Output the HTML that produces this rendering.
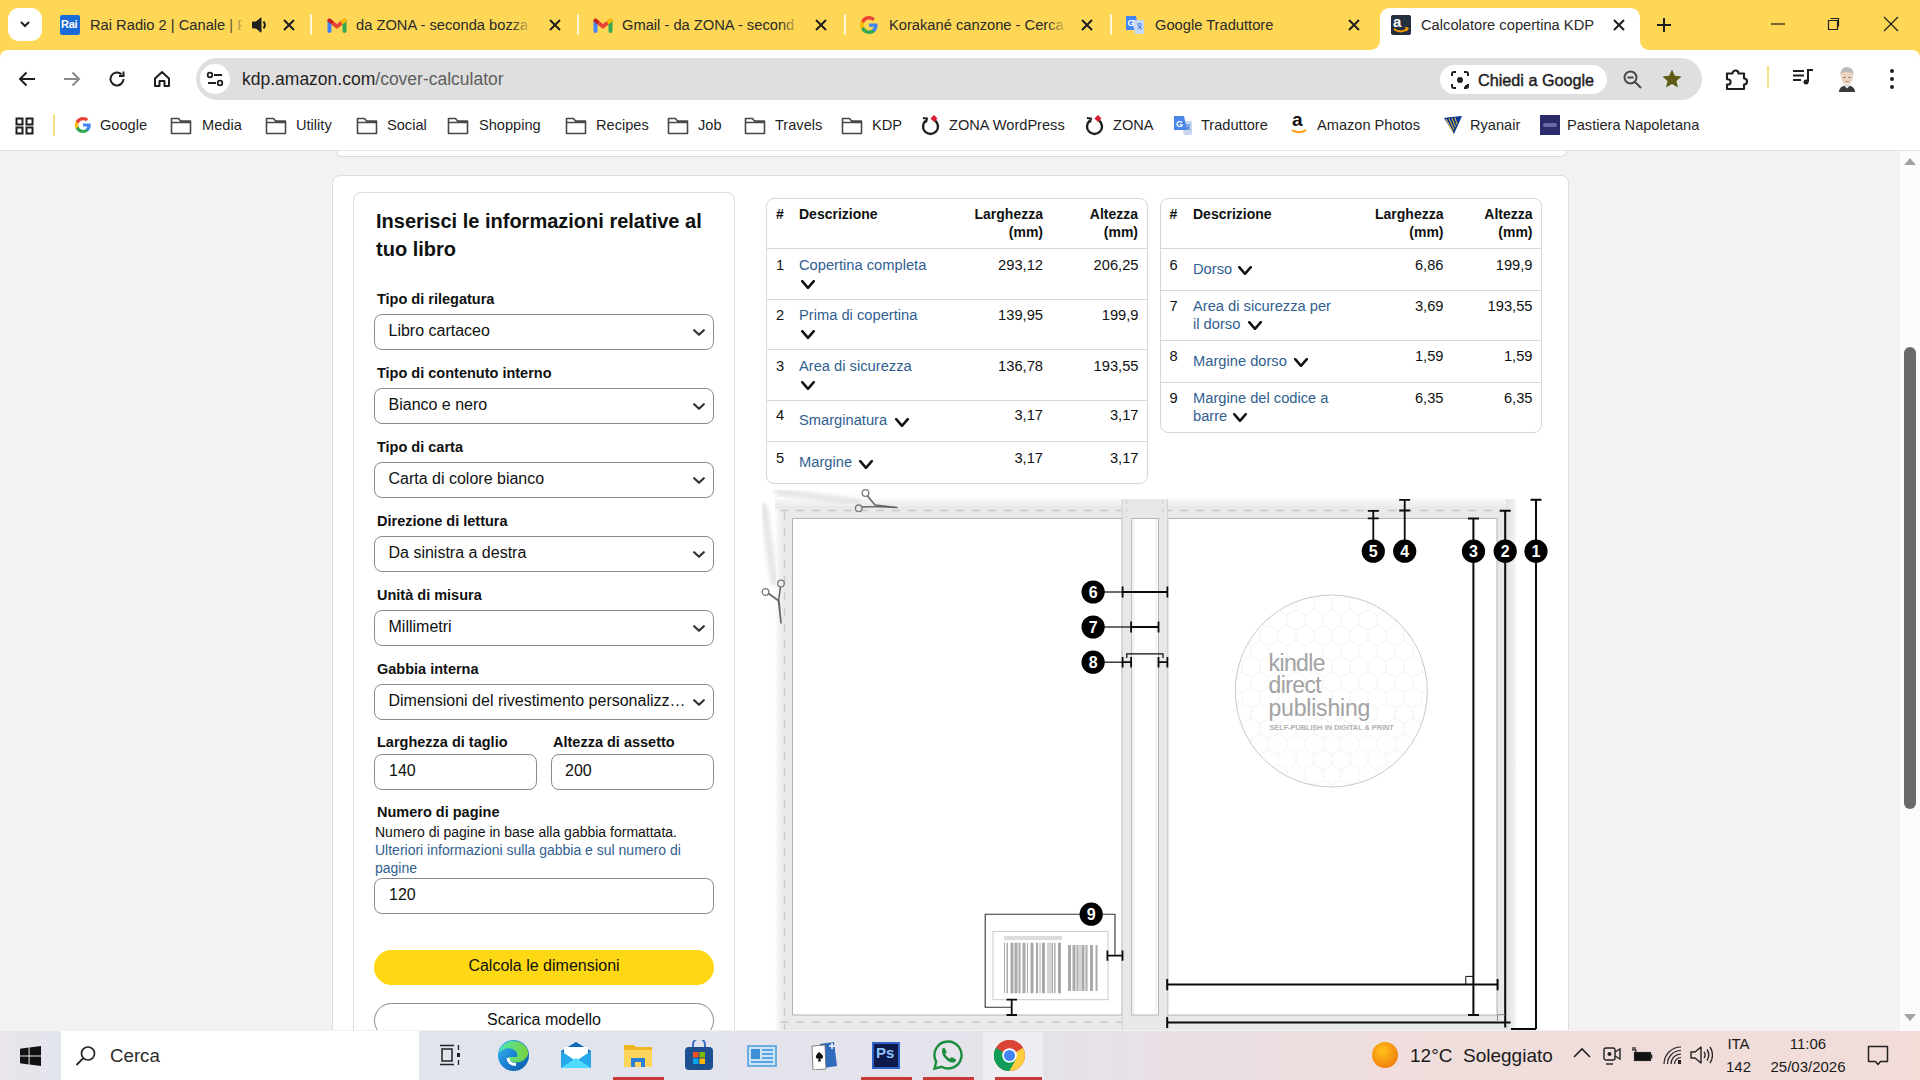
<!DOCTYPE html>
<html><head><meta charset="utf-8">
<style>
*{margin:0;padding:0;box-sizing:border-box}
html,body{width:1920px;height:1080px;overflow:hidden;background:#f2f2f2;font-family:"Liberation Sans",sans-serif;color:#0f1111}
.a{position:absolute;white-space:nowrap}
.t{line-height:normal}
#tabs{position:absolute;left:0;top:0;width:1920px;height:60px;background:#fed757}
#toolbar{position:absolute;left:0;top:50px;width:1920px;height:55px;background:#fff;border-radius:8px 8px 0 0}
#bookmarks{position:absolute;left:0;top:105px;width:1920px;height:46px;background:#fff;border-bottom:1px solid #e3e3e3}
.tt{font-size:14.7px;color:#2a2a2a;top:17px}
.fade{overflow:hidden}
.sep{position:absolute;top:14px;width:2px;height:21px;background:#fff6d8;border-radius:1px}
.bm{font-size:14.6px;color:#1f1f1f;top:116.5px}
</style></head><body>
<div id="tabs">
<div class="a" style="left:8px;top:8px;width:34px;height:33px;background:#fff;border-radius:11px"></div>
<svg class="a" style="left:18px;top:17px" width="14" height="14" viewBox="0 0 14 14"><path d="M3 5l4 4 4-4" fill="none" stroke="#1f1f1f" stroke-width="2"/></svg>
<!-- tab 1 -->
<div class="a" style="left:60px;top:15px;width:20px;height:20px;background:#1a6bd8;border-radius:2px"></div>
<div class="a" style="left:61px;top:18px;font-size:11px;font-weight:bold;color:#fff;letter-spacing:-0.3px">Rai</div>
<div class="a fade tt" style="left:90px;width:152px">Rai Radio 2 | Canale | R</div>
<div class="a" style="left:226px;top:14px;width:20px;height:22px;background:linear-gradient(90deg,rgba(254,215,87,0),#fed757)"></div>
<svg class="a" style="left:251px;top:16px" width="17" height="18" viewBox="0 0 17 18"><path d="M1.5 6h3.5l5-4.2v14.4l-5-4.2H1.5z" fill="#1f1f1f" stroke="#1f1f1f" stroke-width="1" stroke-linejoin="round"/><path d="M12.5 5.5c1.6 2 1.6 5 0 7" fill="none" stroke="#1f1f1f" stroke-width="2"/></svg>
<svg class="a" style="left:282px;top:18px" width="14" height="14" viewBox="0 0 14 14"><path d="M2 2l10 10M12 2L2 12" stroke="#1f1f1f" stroke-width="2"/></svg>
<div class="sep" style="left:310px"></div>
<!-- tab 2 -->
<svg class="a" style="left:327px;top:17px" width="20" height="16" viewBox="0 0 20 16"><path d="M2.5 3.5l7.5 6 7.5-6" fill="none" stroke="#ea4335" stroke-width="4" stroke-linejoin="round" stroke-linecap="round"/><path d="M2.5 14V4" stroke="#4285f4" stroke-width="4" stroke-linecap="round"/><path d="M17.5 14V4" stroke="#34a853" stroke-width="4" stroke-linecap="round"/><path d="M2.5 3.5l1.5 1.2" stroke="#c5221f" stroke-width="4" stroke-linecap="round"/><path d="M16 4.7l1.5-1.2" stroke="#fbbc04" stroke-width="4" stroke-linecap="round"/></svg>
<div class="a fade tt" style="left:356px;width:176px">da ZONA - seconda bozza</div>
<div class="a" style="left:512px;top:14px;width:20px;height:22px;background:linear-gradient(90deg,rgba(254,215,87,0),#fed757)"></div>
<svg class="a" style="left:548px;top:18px" width="14" height="14" viewBox="0 0 14 14"><path d="M2 2l10 10M12 2L2 12" stroke="#1f1f1f" stroke-width="2"/></svg>
<div class="sep" style="left:577px"></div>
<!-- tab 3 -->
<svg class="a" style="left:593px;top:17px" width="20" height="16" viewBox="0 0 20 16"><path d="M2.5 3.5l7.5 6 7.5-6" fill="none" stroke="#ea4335" stroke-width="4" stroke-linejoin="round" stroke-linecap="round"/><path d="M2.5 14V4" stroke="#4285f4" stroke-width="4" stroke-linecap="round"/><path d="M17.5 14V4" stroke="#34a853" stroke-width="4" stroke-linecap="round"/><path d="M2.5 3.5l1.5 1.2" stroke="#c5221f" stroke-width="4" stroke-linecap="round"/><path d="M16 4.7l1.5-1.2" stroke="#fbbc04" stroke-width="4" stroke-linecap="round"/></svg>
<div class="a fade tt" style="left:622px;width:178px">Gmail - da ZONA - second</div>
<div class="a" style="left:780px;top:14px;width:20px;height:22px;background:linear-gradient(90deg,rgba(254,215,87,0),#fed757)"></div>
<svg class="a" style="left:814px;top:18px" width="14" height="14" viewBox="0 0 14 14"><path d="M2 2l10 10M12 2L2 12" stroke="#1f1f1f" stroke-width="2"/></svg>
<div class="sep" style="left:844px"></div>
<!-- tab 4 -->
<svg class="a" style="left:859px;top:15px" width="20" height="20" viewBox="0 0 20 20"><path d="M18.6 10.2c0-.6-.1-1.2-.2-1.8H10v3.4h4.8c-.2 1.1-.8 2-1.8 2.7v2.2h2.9c1.7-1.6 2.7-3.9 2.7-6.5z" fill="#4285f4"/><path d="M10 19c2.4 0 4.5-.8 5.9-2.2L13 14.6c-.8.5-1.8.9-3 .9-2.3 0-4.3-1.6-5-3.7H2v2.3C3.5 17 6.5 19 10 19z" fill="#34a853"/><path d="M5 11.8c-.2-.5-.3-1.1-.3-1.8s.1-1.2.3-1.8V5.9H2C1.4 7.1 1 8.5 1 10s.4 2.9 1 4.1l3-2.3z" fill="#fbbc05"/><path d="M10 4.6c1.3 0 2.5.5 3.4 1.3L16 3.4C14.5 1.9 12.4 1 10 1 6.5 1 3.5 3 2 5.9l3 2.3c.7-2.1 2.7-3.6 5-3.6z" fill="#ea4335"/></svg>
<div class="a fade tt" style="left:889px;width:178px">Korakané canzone - Cerca</div>
<div class="a" style="left:1047px;top:14px;width:20px;height:22px;background:linear-gradient(90deg,rgba(254,215,87,0),#fed757)"></div>
<svg class="a" style="left:1080px;top:18px" width="14" height="14" viewBox="0 0 14 14"><path d="M2 2l10 10M12 2L2 12" stroke="#1f1f1f" stroke-width="2"/></svg>
<div class="sep" style="left:1110px"></div>
<!-- tab 5 -->
<svg class="a" style="left:1125px;top:15px" width="20" height="20" viewBox="0 0 20 20"><path d="M1 1h10l3 14H1z" fill="#4285f4"/><path d="M7 5h12v14H10z" fill="#c6d6f5"/><text x="2.5" y="11" font-size="9" font-weight="bold" fill="#fff" font-family="Liberation Sans">G</text><path d="M12 9h5M14.5 8v1M13 10c1 2 2 3 4 4M16 10c-.5 2-1.5 3-3 4" stroke="#4285f4" stroke-width="1"/></svg>
<div class="a tt" style="left:1155px">Google Traduttore</div>
<svg class="a" style="left:1347px;top:18px" width="14" height="14" viewBox="0 0 14 14"><path d="M2 2l10 10M12 2L2 12" stroke="#1f1f1f" stroke-width="2"/></svg>
<!-- active tab -->
<svg class="a" style="left:1370px;top:8px" width="280" height="42" viewBox="0 0 280 42"><path d="M0 42c6 0 10-4 10-10V10C10 4 14 0 20 0h240c6 0 10 4 10 10v22c0 6 4 10 10 10z" fill="#fff"/></svg>
<div class="a" style="left:1391px;top:15px;width:20px;height:20px;background:#232f3e;border-radius:2px"></div>
<div class="a" style="left:1393px;top:13px;font-size:15px;font-weight:bold;color:#fff">a</div>
<svg class="a" style="left:1392px;top:27px" width="18" height="7" viewBox="0 0 18 7"><path d="M2 2c4 3 9 3 13 0" fill="none" stroke="#ff9900" stroke-width="2"/><path d="M13 0l3 1.5-2 2.5" fill="none" stroke="#ff9900" stroke-width="1.5"/></svg>
<div class="a tt" style="left:1421px">Calcolatore copertina KDP</div>
<svg class="a" style="left:1612px;top:18px" width="14" height="14" viewBox="0 0 14 14"><path d="M2 2l10 10M12 2L2 12" stroke="#1f1f1f" stroke-width="2"/></svg>
<svg class="a" style="left:1656px;top:17px" width="16" height="16" viewBox="0 0 16 16"><path d="M8 1v14M1 8h14" stroke="#1f1f1f" stroke-width="2"/></svg>
<!-- window controls -->
<svg class="a" style="left:1770px;top:16px" width="16" height="16" viewBox="0 0 16 16"><path d="M1 8h14" stroke="#1f1f1f" stroke-width="1.2"/></svg>
<svg class="a" style="left:1825px;top:16px" width="16" height="16" viewBox="0 0 16 16"><path d="M3.5 4.5h9v9h-9z M5.5 2.5h8v8" fill="none" stroke="#1f1f1f" stroke-width="1.2"/></svg>
<svg class="a" style="left:1883px;top:16px" width="16" height="16" viewBox="0 0 16 16"><path d="M1 1l14 14M15 1L1 15" stroke="#1f1f1f" stroke-width="1.2"/></svg>
</div>
<div id="toolbar">
<svg class="a" style="left:17px;top:20px" width="20" height="18" viewBox="0 0 20 18"><path d="M18 9H3M9.5 2.5L3 9l6.5 6.5" fill="none" stroke="#1f1f1f" stroke-width="2"/></svg>
<svg class="a" style="left:62px;top:20px" width="20" height="18" viewBox="0 0 20 18"><path d="M2 9h15M10.5 2.5L17 9l-6.5 6.5" fill="none" stroke="#8a8a8a" stroke-width="2"/></svg>
<svg class="a" style="left:107px;top:19px" width="20" height="20" viewBox="0 0 20 20"><path d="M16.5 10A6.5 6.5 0 1 1 14.6 5.4" fill="none" stroke="#1f1f1f" stroke-width="2"/><path d="M16.5 2.5v4.5H12" fill="none" stroke="#1f1f1f" stroke-width="2"/></svg>
<svg class="a" style="left:152px;top:19px" width="20" height="20" viewBox="0 0 20 20"><path d="M3 9.5L10 3l7 6.5V17h-4.5v-5h-5v5H3z" fill="none" stroke="#1f1f1f" stroke-width="2" stroke-linejoin="round"/></svg>
<div class="a" style="left:196px;top:8px;width:1506px;height:42px;background:#dfdfdf;border-radius:21px"></div>
<div class="a" style="left:200px;top:14px;width:30px;height:30px;background:#fff;border-radius:15px"></div>
<svg class="a" style="left:205px;top:19px" width="20" height="20" viewBox="0 0 20 20"><circle cx="5" cy="6" r="2.3" fill="none" stroke="#1f1f1f" stroke-width="1.8"/><path d="M9 6h8M3 14h8" stroke="#1f1f1f" stroke-width="1.8"/><circle cx="15" cy="14" r="2.3" fill="none" stroke="#1f1f1f" stroke-width="1.8"/></svg>
<div class="a" style="left:242px;top:19px;font-size:17.5px;color:#1f1f1f">kdp.amazon.com<span style="color:#5e5e5e">/cover-calculator</span></div>
<div class="a" style="left:1440px;top:15px;width:167px;height:29px;background:#fff;border-radius:15px"></div>
<svg class="a" style="left:1450px;top:20px" width="20" height="20" viewBox="0 0 20 20"><path d="M2 6V4a2 2 0 0 1 2-2h2M14 2h2a2 2 0 0 1 2 2v2M18 14v2a2 2 0 0 1-2 2h-2M6 18H4a2 2 0 0 1-2-2v-2" fill="none" stroke="#1f1f1f" stroke-width="2"/><circle cx="10" cy="10" r="3" fill="#1f1f1f"/><circle cx="16.5" cy="16.5" r="1.8" fill="#1f1f1f"/></svg>
<div class="a" style="left:1478px;top:21px;font-size:16.2px;font-weight:normal;-webkit-text-stroke:0.45px #1f1f1f;color:#1f1f1f">Chiedi a Google</div>
<svg class="a" style="left:1622px;top:19px" width="22" height="22" viewBox="0 0 22 22"><circle cx="8.5" cy="8.5" r="6" fill="none" stroke="#474747" stroke-width="2"/><path d="M13 13l6 6M5.5 8.5h6" stroke="#474747" stroke-width="2"/></svg>
<svg class="a" style="left:1661px;top:18px" width="22" height="22" viewBox="0 0 22 22"><path d="M11 1.5l2.8 6.3 6.8.6-5.2 4.5 1.6 6.7L11 16.1l-6 3.5 1.6-6.7L1.4 8.4l6.8-.6z" fill="#5e5b17"/></svg>
<svg class="a" style="left:1724px;top:17px" width="26" height="24" viewBox="0 0 26 24"><path d="M3 6.5h5.5a3 3 0 0 1 6 0H20v5a3 3 0 0 1 0 6V22H3v-4.5h1a2.6 2.6 0 0 0 0-5.2H3z" fill="none" stroke="#1f1f1f" stroke-width="2.1" stroke-linejoin="round"/></svg>
<div class="a" style="left:1767px;top:16px;width:2px;height:22px;background:#f8df86"></div>
<svg class="a" style="left:1792px;top:18px" width="22" height="20" viewBox="0 0 22 20"><path d="M1 3h11M1 7.5h11M1 12h8" stroke="#1f1f1f" stroke-width="2"/><path d="M16 14V2h5" fill="none" stroke="#1f1f1f" stroke-width="2"/><circle cx="14" cy="14" r="2.5" fill="#1f1f1f"/></svg>
<svg class="a" style="left:1836px;top:15px" width="22" height="27" viewBox="0 0 22 27"><path d="M3 27c0-4 3-6.5 8-6.5s8 2.5 8 6.5z" fill="#3a3a3a"/><path d="M8 20.5l3 3 3-3z" fill="#f0f0f0"/><ellipse cx="11" cy="12" rx="6" ry="7.5" fill="#ecd3bd"/><path d="M4.5 11c-.5-6 2.5-9 6.5-9s7 3 6.5 9c-.8-2.5-2-4-6.5-4s-5.7 1.5-6.5 4z" fill="#b9b9b9"/><path d="M7.5 12.5h2M12.5 12.5h2" stroke="#6b5b4f" stroke-width="1"/><path d="M9 16.5h4" stroke="#b98a78" stroke-width="0.9"/></svg>
<svg class="a" style="left:1884px;top:18px" width="16" height="22" viewBox="0 0 16 22"><circle cx="8" cy="3" r="2" fill="#1f1f1f"/><circle cx="8" cy="11" r="2" fill="#1f1f1f"/><circle cx="8" cy="19" r="2" fill="#1f1f1f"/></svg>
</div>
<div id="bookmarks"></div>
<svg class="a" style="left:15px;top:117px" width="19" height="18" viewBox="0 0 19 18"><path d="M1.5 1.5h6v6h-6zM11.5 1.5h6v6h-6zM1.5 10.5h6v6h-6zM11.5 10.5h6v6h-6z" fill="none" stroke="#1f1f1f" stroke-width="2"/></svg>
<div class="a" style="left:53px;top:114px;width:2px;height:22px;background:#f8df86"></div>
<svg class="a" style="left:74px;top:116px" width="18" height="18" viewBox="0 0 20 20"><path d="M18.6 10.2c0-.6-.1-1.2-.2-1.8H10v3.4h4.8c-.2 1.1-.8 2-1.8 2.7v2.2h2.9c1.7-1.6 2.7-3.9 2.7-6.5z" fill="#4285f4"/><path d="M10 19c2.4 0 4.5-.8 5.9-2.2L13 14.6c-.8.5-1.8.9-3 .9-2.3 0-4.3-1.6-5-3.7H2v2.3C3.5 17 6.5 19 10 19z" fill="#34a853"/><path d="M5 11.8c-.2-.5-.3-1.1-.3-1.8s.1-1.2.3-1.8V5.9H2C1.4 7.1 1 8.5 1 10s.4 2.9 1 4.1l3-2.3z" fill="#fbbc05"/><path d="M10 4.6c1.3 0 2.5.5 3.4 1.3L16 3.4C14.5 1.9 12.4 1 10 1 6.5 1 3.5 3 2 5.9l3 2.3c.7-2.1 2.7-3.6 5-3.6z" fill="#ea4335"/></svg>
<div class="a bm" style="left:100px">Google</div>
<svg class="a" style="left:170px;top:116px" width="22" height="19" viewBox="0 0 22 19"><path d="M1.5 2.5h7l2 2.5h10v12.5h-19z M1.5 6.5h19" fill="none" stroke="#474747" stroke-width="1.6" stroke-linejoin="round"/></svg><div class="a bm" style="left:202px">Media</div>
<svg class="a" style="left:265px;top:116px" width="22" height="19" viewBox="0 0 22 19"><path d="M1.5 2.5h7l2 2.5h10v12.5h-19z M1.5 6.5h19" fill="none" stroke="#474747" stroke-width="1.6" stroke-linejoin="round"/></svg><div class="a bm" style="left:296px">Utility</div>
<svg class="a" style="left:356px;top:116px" width="22" height="19" viewBox="0 0 22 19"><path d="M1.5 2.5h7l2 2.5h10v12.5h-19z M1.5 6.5h19" fill="none" stroke="#474747" stroke-width="1.6" stroke-linejoin="round"/></svg><div class="a bm" style="left:387px">Social</div>
<svg class="a" style="left:447px;top:116px" width="22" height="19" viewBox="0 0 22 19"><path d="M1.5 2.5h7l2 2.5h10v12.5h-19z M1.5 6.5h19" fill="none" stroke="#474747" stroke-width="1.6" stroke-linejoin="round"/></svg><div class="a bm" style="left:479px">Shopping</div>
<svg class="a" style="left:565px;top:116px" width="22" height="19" viewBox="0 0 22 19"><path d="M1.5 2.5h7l2 2.5h10v12.5h-19z M1.5 6.5h19" fill="none" stroke="#474747" stroke-width="1.6" stroke-linejoin="round"/></svg><div class="a bm" style="left:596px">Recipes</div>
<svg class="a" style="left:667px;top:116px" width="22" height="19" viewBox="0 0 22 19"><path d="M1.5 2.5h7l2 2.5h10v12.5h-19z M1.5 6.5h19" fill="none" stroke="#474747" stroke-width="1.6" stroke-linejoin="round"/></svg><div class="a bm" style="left:698px">Job</div>
<svg class="a" style="left:744px;top:116px" width="22" height="19" viewBox="0 0 22 19"><path d="M1.5 2.5h7l2 2.5h10v12.5h-19z M1.5 6.5h19" fill="none" stroke="#474747" stroke-width="1.6" stroke-linejoin="round"/></svg><div class="a bm" style="left:775px">Travels</div>
<svg class="a" style="left:841px;top:116px" width="22" height="19" viewBox="0 0 22 19"><path d="M1.5 2.5h7l2 2.5h10v12.5h-19z M1.5 6.5h19" fill="none" stroke="#474747" stroke-width="1.6" stroke-linejoin="round"/></svg><div class="a bm" style="left:872px">KDP</div>
<svg class="a" style="left:920px;top:114px" width="21" height="22" viewBox="0 0 21 22"><path d="M6 6.5A7.5 7.5 0 1 0 15 6.5" fill="none" stroke="#1f1f1f" stroke-width="2.4"/><path d="M3 4l4 .5-1 4" fill="none" stroke="#1f1f1f" stroke-width="2"/><path d="M14 1l3.5 3.5-3.5 3.5-3.5-3.5z" fill="#d81b2b"/></svg><div class="a bm" style="left:949px">ZONA WordPress</div>
<svg class="a" style="left:1084px;top:114px" width="21" height="22" viewBox="0 0 21 22"><path d="M6 6.5A7.5 7.5 0 1 0 15 6.5" fill="none" stroke="#1f1f1f" stroke-width="2.4"/><path d="M3 4l4 .5-1 4" fill="none" stroke="#1f1f1f" stroke-width="2"/><path d="M14 1l3.5 3.5-3.5 3.5-3.5-3.5z" fill="#d81b2b"/></svg><div class="a bm" style="left:1113px">ZONA</div>
<svg class="a" style="left:1173px;top:115px" width="20" height="21" viewBox="0 0 20 21"><path d="M8 6h11v14H11z" fill="#c9d7f3"/><path d="M1 1h10l3 14H1z" fill="#4a86e8"/><text x="3" y="11.5" font-size="9" font-weight="bold" fill="#fff" font-family="Liberation Sans">G</text><path d="M12.5 10h5M15 9v1M13.5 11c1 2 2 3 4 4M16.5 11c-.5 2-1.5 3-3 4" stroke="#4a86e8" stroke-width="1"/></svg><div class="a bm" style="left:1201px">Traduttore</div>
<div class="a" style="left:1292px;top:109px;font-size:19px;font-weight:bold;color:#111">a</div>
<svg class="a" style="left:1291px;top:128px" width="18" height="7" viewBox="0 0 18 7"><path d="M1 2c4 3 10 3 14 0" fill="none" stroke="#ff9900" stroke-width="2"/></svg>
<div class="a bm" style="left:1317px">Amazon Photos</div>
<svg class="a" style="left:1443px;top:115px" width="20" height="20" viewBox="0 0 20 20"><path d="M1 3c4-1 10-1 18-2l-8 18z" fill="#073590"/><path d="M3 4l7 13M6 3.5l5 11M9 3l3.5 9M12 2.5l2 7" stroke="#f1c933" stroke-width="1"/></svg>
<div class="a bm" style="left:1470px">Ryanair</div>
<div class="a" style="left:1540px;top:115px;width:20px;height:20px;background:#2b2a6b"></div>
<div class="a" style="left:1543px;top:123px;width:14px;height:4px;background:#6a6aa8;border-radius:2px"></div>
<div class="a bm" style="left:1567px">Pastiera Napoletana</div>


<div id="page" style="position:absolute;left:0;top:151px;width:1900px;height:879px;overflow:hidden"><div style="position:absolute;left:0;top:-151px;width:1900px;height:1080px">
<div class="a" style="left:336px;top:151px;width:1231px;height:6px;background:#fff;border:1px solid #dcdcdc;border-top:none;border-radius:0 0 8px 8px"></div>
<div class="a" style="left:332px;top:175px;width:1237px;height:900px;background:#fff;border:1px solid #dddddd;border-radius:8px"></div>
<div class="a" style="left:353px;top:192px;width:382px;height:900px;background:#fff;border:1px solid #dddddd;border-radius:8px"></div>
<div class="a t" style="left:376px;top:210.40px;font-size:20px;font-weight:bold;color:#0f1111;">Inserisci le informazioni relative al</div>
<div class="a t" style="left:376px;top:237.60px;font-size:20px;font-weight:bold;color:#0f1111;">tuo libro</div>
<div class="a t" style="left:377px;top:290.78px;font-size:14.5px;font-weight:bold;color:#0f1111;">Tipo di rilegatura</div>
<div class="a" style="left:374px;top:314px;width:340px;height:36px;background:#fff;border:1px solid #888c8c;border-radius:8px"></div>
<div class="a t" style="left:388.5px;top:322.22px;font-size:16px;font-weight:normal;color:#0f1111;">Libro cartaceo</div>
<svg class="a" style="left:693px;top:328.5px" width="12" height="7" viewBox="0 0 12 7"><path d="M1.2 1.2L6.0 5.8L10.8 1.2" fill="none" stroke="#333" stroke-width="2.2" stroke-linecap="round" stroke-linejoin="round"/></svg>
<div class="a t" style="left:377px;top:364.78px;font-size:14.5px;font-weight:bold;color:#0f1111;">Tipo di contenuto interno</div>
<div class="a" style="left:374px;top:388px;width:340px;height:36px;background:#fff;border:1px solid #888c8c;border-radius:8px"></div>
<div class="a t" style="left:388.5px;top:396.22px;font-size:16px;font-weight:normal;color:#0f1111;">Bianco e nero</div>
<svg class="a" style="left:693px;top:402.5px" width="12" height="7" viewBox="0 0 12 7"><path d="M1.2 1.2L6.0 5.8L10.8 1.2" fill="none" stroke="#333" stroke-width="2.2" stroke-linecap="round" stroke-linejoin="round"/></svg>
<div class="a t" style="left:377px;top:438.78px;font-size:14.5px;font-weight:bold;color:#0f1111;">Tipo di carta</div>
<div class="a" style="left:374px;top:462px;width:340px;height:36px;background:#fff;border:1px solid #888c8c;border-radius:8px"></div>
<div class="a t" style="left:388.5px;top:470.22px;font-size:16px;font-weight:normal;color:#0f1111;">Carta di colore bianco</div>
<svg class="a" style="left:693px;top:476.5px" width="12" height="7" viewBox="0 0 12 7"><path d="M1.2 1.2L6.0 5.8L10.8 1.2" fill="none" stroke="#333" stroke-width="2.2" stroke-linecap="round" stroke-linejoin="round"/></svg>
<div class="a t" style="left:377px;top:512.78px;font-size:14.5px;font-weight:bold;color:#0f1111;">Direzione di lettura</div>
<div class="a" style="left:374px;top:536px;width:340px;height:36px;background:#fff;border:1px solid #888c8c;border-radius:8px"></div>
<div class="a t" style="left:388.5px;top:544.22px;font-size:16px;font-weight:normal;color:#0f1111;">Da sinistra a destra</div>
<svg class="a" style="left:693px;top:550.5px" width="12" height="7" viewBox="0 0 12 7"><path d="M1.2 1.2L6.0 5.8L10.8 1.2" fill="none" stroke="#333" stroke-width="2.2" stroke-linecap="round" stroke-linejoin="round"/></svg>
<div class="a t" style="left:377px;top:586.78px;font-size:14.5px;font-weight:bold;color:#0f1111;">Unità di misura</div>
<div class="a" style="left:374px;top:610px;width:340px;height:36px;background:#fff;border:1px solid #888c8c;border-radius:8px"></div>
<div class="a t" style="left:388.5px;top:618.22px;font-size:16px;font-weight:normal;color:#0f1111;">Millimetri</div>
<svg class="a" style="left:693px;top:624.5px" width="12" height="7" viewBox="0 0 12 7"><path d="M1.2 1.2L6.0 5.8L10.8 1.2" fill="none" stroke="#333" stroke-width="2.2" stroke-linecap="round" stroke-linejoin="round"/></svg>
<div class="a t" style="left:377px;top:660.78px;font-size:14.5px;font-weight:bold;color:#0f1111;">Gabbia interna</div>
<div class="a" style="left:374px;top:684px;width:340px;height:36px;background:#fff;border:1px solid #888c8c;border-radius:8px"></div>
<div class="a t" style="left:388.5px;top:692.22px;font-size:16px;font-weight:normal;color:#0f1111;">Dimensioni del rivestimento personalizz…</div>
<svg class="a" style="left:693px;top:698.5px" width="12" height="7" viewBox="0 0 12 7"><path d="M1.2 1.2L6.0 5.8L10.8 1.2" fill="none" stroke="#333" stroke-width="2.2" stroke-linecap="round" stroke-linejoin="round"/></svg>
<div class="a t" style="left:377px;top:734.48px;font-size:14.5px;font-weight:bold;color:#0f1111;">Larghezza di taglio</div>
<div class="a t" style="left:553px;top:734.48px;font-size:14.5px;font-weight:bold;color:#0f1111;">Altezza di assetto</div>
<div class="a" style="left:374px;top:754px;width:163px;height:36px;background:#fff;border:1px solid #888c8c;border-radius:8px"></div>
<div class="a" style="left:551px;top:754px;width:163px;height:36px;background:#fff;border:1px solid #888c8c;border-radius:8px"></div>
<div class="a t" style="left:389px;top:762.22px;font-size:16px;font-weight:normal;color:#0f1111;">140</div>
<div class="a t" style="left:565px;top:762.22px;font-size:16px;font-weight:normal;color:#0f1111;">200</div>
<div class="a t" style="left:377px;top:803.58px;font-size:14.5px;font-weight:bold;color:#0f1111;">Numero di pagine</div>
<div class="a t" style="left:375px;top:824.33px;font-size:14px;font-weight:normal;color:#0f1111;">Numero di pagine in base alla gabbia formattata.</div>
<div class="a t" style="left:375px;top:841.73px;font-size:14px;font-weight:normal;color:#30608f;">Ulteriori informazioni sulla gabbia e sul numero di</div>
<div class="a t" style="left:375px;top:859.53px;font-size:14px;font-weight:normal;color:#30608f;">pagine</div>
<div class="a" style="left:374px;top:878px;width:340px;height:36px;background:#fff;border:1px solid #888c8c;border-radius:8px"></div>
<div class="a t" style="left:389px;top:885.92px;font-size:16px;font-weight:normal;color:#0f1111;">120</div>
<div class="a" style="left:374px;top:950px;width:340px;height:35px;background:#ffd814;border-radius:18px"></div>
<div class="a t" style="left:544px;transform:translateX(-50%);top:957.22px;font-size:16px;font-weight:normal;color:#0f1111;">Calcola le dimensioni</div>
<div class="a" style="left:374px;top:1003px;width:340px;height:35px;background:#fff;border:1px solid #888c8c;border-radius:18px"></div>
<div class="a t" style="left:544px;transform:translateX(-50%);top:1011.12px;font-size:16px;font-weight:normal;color:#0f1111;">Scarica modello</div>
<div class="a" style="left:766px;top:198px;width:382px;height:286px;background:#fff;border:1px solid #d5d9d9;border-radius:8px"></div>
<div class="a" style="left:767px;top:248px;width:380px;height:1px;background:#d5d9d9"></div>
<div class="a" style="left:767px;top:299px;width:380px;height:1px;background:#d5d9d9"></div>
<div class="a" style="left:767px;top:349px;width:380px;height:1px;background:#d5d9d9"></div>
<div class="a" style="left:767px;top:400px;width:380px;height:1px;background:#d5d9d9"></div>
<div class="a" style="left:767px;top:441px;width:380px;height:1px;background:#d5d9d9"></div>
<div class="a" style="left:1160px;top:198px;width:382px;height:235px;background:#fff;border:1px solid #d5d9d9;border-radius:8px"></div>
<div class="a" style="left:1161px;top:248px;width:380px;height:1px;background:#d5d9d9"></div>
<div class="a" style="left:1161px;top:290px;width:380px;height:1px;background:#d5d9d9"></div>
<div class="a" style="left:1161px;top:340px;width:380px;height:1px;background:#d5d9d9"></div>
<div class="a" style="left:1161px;top:382px;width:380px;height:1px;background:#d5d9d9"></div>
<div class="a t" style="left:776px;top:206.33px;font-size:14px;font-weight:bold;color:#0f1111;">#</div>
<div class="a t" style="left:799px;top:206.33px;font-size:14px;font-weight:bold;color:#0f1111;">Descrizione</div>
<div class="a t" style="right:857px;top:206.33px;font-size:14px;font-weight:bold;color:#0f1111;">Larghezza</div>
<div class="a t" style="right:857px;top:224.33px;font-size:14px;font-weight:bold;color:#0f1111;">(mm)</div>
<div class="a t" style="right:762px;top:206.33px;font-size:14px;font-weight:bold;color:#0f1111;">Altezza</div>
<div class="a t" style="right:762px;top:224.33px;font-size:14px;font-weight:bold;color:#0f1111;">(mm)</div>
<div class="a t" style="left:1169.5px;top:206.33px;font-size:14px;font-weight:bold;color:#0f1111;">#</div>
<div class="a t" style="left:1193px;top:206.33px;font-size:14px;font-weight:bold;color:#0f1111;">Descrizione</div>
<div class="a t" style="right:456.5px;top:206.33px;font-size:14px;font-weight:bold;color:#0f1111;">Larghezza</div>
<div class="a t" style="right:456.5px;top:224.33px;font-size:14px;font-weight:bold;color:#0f1111;">(mm)</div>
<div class="a t" style="right:367.5px;top:206.33px;font-size:14px;font-weight:bold;color:#0f1111;">Altezza</div>
<div class="a t" style="right:367.5px;top:224.33px;font-size:14px;font-weight:bold;color:#0f1111;">(mm)</div>
<div class="a t" style="left:776px;top:256.60px;font-size:14.7px;font-weight:normal;color:#0f1111;">1</div>
<div class="a t" style="left:799px;top:256.60px;font-size:14.7px;font-weight:normal;color:#30608f;">Copertina completa</div>
<svg class="a" style="left:801px;top:280px" width="14" height="9" viewBox="0 0 14 9"><path d="M1.2 1.2L7.0 7.8L12.8 1.2" fill="none" stroke="#111" stroke-width="2.5" stroke-linecap="round" stroke-linejoin="round"/></svg>
<div class="a t" style="right:857px;top:256.60px;font-size:14.7px;font-weight:normal;color:#0f1111;">293,12</div>
<div class="a t" style="right:761.5px;top:256.60px;font-size:14.7px;font-weight:normal;color:#0f1111;">206,25</div>
<div class="a t" style="left:776px;top:306.80px;font-size:14.7px;font-weight:normal;color:#0f1111;">2</div>
<div class="a t" style="left:799px;top:306.80px;font-size:14.7px;font-weight:normal;color:#30608f;">Prima di copertina</div>
<svg class="a" style="left:801px;top:330px" width="14" height="9" viewBox="0 0 14 9"><path d="M1.2 1.2L7.0 7.8L12.8 1.2" fill="none" stroke="#111" stroke-width="2.5" stroke-linecap="round" stroke-linejoin="round"/></svg>
<div class="a t" style="right:857px;top:306.80px;font-size:14.7px;font-weight:normal;color:#0f1111;">139,95</div>
<div class="a t" style="right:761.5px;top:306.80px;font-size:14.7px;font-weight:normal;color:#0f1111;">199,9</div>
<div class="a t" style="left:776px;top:357.60px;font-size:14.7px;font-weight:normal;color:#0f1111;">3</div>
<div class="a t" style="left:799px;top:357.60px;font-size:14.7px;font-weight:normal;color:#30608f;">Area di sicurezza</div>
<svg class="a" style="left:801px;top:381px" width="14" height="9" viewBox="0 0 14 9"><path d="M1.2 1.2L7.0 7.8L12.8 1.2" fill="none" stroke="#111" stroke-width="2.5" stroke-linecap="round" stroke-linejoin="round"/></svg>
<div class="a t" style="right:857px;top:357.60px;font-size:14.7px;font-weight:normal;color:#0f1111;">136,78</div>
<div class="a t" style="right:761.5px;top:357.60px;font-size:14.7px;font-weight:normal;color:#0f1111;">193,55</div>
<div class="a t" style="left:776px;top:407.30px;font-size:14.7px;font-weight:normal;color:#0f1111;">4</div>
<div class="a t" style="left:799px;top:412.20px;font-size:14.7px;font-weight:normal;color:#30608f;">Smarginatura</div>
<svg class="a" style="left:895px;top:418px" width="14" height="9" viewBox="0 0 14 9"><path d="M1.2 1.2L7.0 7.8L12.8 1.2" fill="none" stroke="#111" stroke-width="2.5" stroke-linecap="round" stroke-linejoin="round"/></svg>
<div class="a t" style="right:857px;top:407.30px;font-size:14.7px;font-weight:normal;color:#0f1111;">3,17</div>
<div class="a t" style="right:761.5px;top:407.30px;font-size:14.7px;font-weight:normal;color:#0f1111;">3,17</div>
<div class="a t" style="left:776px;top:449.50px;font-size:14.7px;font-weight:normal;color:#0f1111;">5</div>
<div class="a t" style="left:799px;top:453.80px;font-size:14.7px;font-weight:normal;color:#30608f;">Margine</div>
<svg class="a" style="left:858.5px;top:459.5px" width="14" height="9" viewBox="0 0 14 9"><path d="M1.2 1.2L7.0 7.8L12.8 1.2" fill="none" stroke="#111" stroke-width="2.5" stroke-linecap="round" stroke-linejoin="round"/></svg>
<div class="a t" style="right:857px;top:449.50px;font-size:14.7px;font-weight:normal;color:#0f1111;">3,17</div>
<div class="a t" style="right:761.5px;top:449.50px;font-size:14.7px;font-weight:normal;color:#0f1111;">3,17</div>
<div class="a t" style="left:1169.5px;top:256.50px;font-size:14.7px;font-weight:normal;color:#0f1111;">6</div>
<div class="a t" style="left:1193px;top:260.80px;font-size:14.7px;font-weight:normal;color:#30608f;">Dorso</div>
<svg class="a" style="left:1237.5px;top:266px" width="14" height="9" viewBox="0 0 14 9"><path d="M1.2 1.2L7.0 7.8L12.8 1.2" fill="none" stroke="#111" stroke-width="2.5" stroke-linecap="round" stroke-linejoin="round"/></svg>
<div class="a t" style="right:456.5px;top:256.50px;font-size:14.7px;font-weight:normal;color:#0f1111;">6,86</div>
<div class="a t" style="right:367.5px;top:256.50px;font-size:14.7px;font-weight:normal;color:#0f1111;">199,9</div>
<div class="a t" style="left:1169.5px;top:297.90px;font-size:14.7px;font-weight:normal;color:#0f1111;">7</div>
<div class="a t" style="left:1193px;top:297.90px;font-size:14.7px;font-weight:normal;color:#30608f;">Area di sicurezza per</div>
<div class="a t" style="left:1193px;top:315.90px;font-size:14.7px;font-weight:normal;color:#30608f;">il dorso</div>
<svg class="a" style="left:1248px;top:321px" width="14" height="9" viewBox="0 0 14 9"><path d="M1.2 1.2L7.0 7.8L12.8 1.2" fill="none" stroke="#111" stroke-width="2.5" stroke-linecap="round" stroke-linejoin="round"/></svg>
<div class="a t" style="right:456.5px;top:297.90px;font-size:14.7px;font-weight:normal;color:#0f1111;">3,69</div>
<div class="a t" style="right:367.5px;top:297.90px;font-size:14.7px;font-weight:normal;color:#0f1111;">193,55</div>
<div class="a t" style="left:1169.5px;top:348.40px;font-size:14.7px;font-weight:normal;color:#0f1111;">8</div>
<div class="a t" style="left:1193px;top:352.70px;font-size:14.7px;font-weight:normal;color:#30608f;">Margine dorso</div>
<svg class="a" style="left:1293.5px;top:358px" width="14" height="9" viewBox="0 0 14 9"><path d="M1.2 1.2L7.0 7.8L12.8 1.2" fill="none" stroke="#111" stroke-width="2.5" stroke-linecap="round" stroke-linejoin="round"/></svg>
<div class="a t" style="right:456.5px;top:348.40px;font-size:14.7px;font-weight:normal;color:#0f1111;">1,59</div>
<div class="a t" style="right:367.5px;top:348.40px;font-size:14.7px;font-weight:normal;color:#0f1111;">1,59</div>
<div class="a t" style="left:1169.5px;top:389.70px;font-size:14.7px;font-weight:normal;color:#0f1111;">9</div>
<div class="a t" style="left:1193px;top:389.70px;font-size:14.7px;font-weight:normal;color:#30608f;">Margine del codice a</div>
<div class="a t" style="left:1193px;top:407.80px;font-size:14.7px;font-weight:normal;color:#30608f;">barre</div>
<svg class="a" style="left:1233px;top:413px" width="14" height="9" viewBox="0 0 14 9"><path d="M1.2 1.2L7.0 7.8L12.8 1.2" fill="none" stroke="#111" stroke-width="2.5" stroke-linecap="round" stroke-linejoin="round"/></svg>
<div class="a t" style="right:456.5px;top:389.70px;font-size:14.7px;font-weight:normal;color:#0f1111;">6,35</div>
<div class="a t" style="right:367.5px;top:389.70px;font-size:14.7px;font-weight:normal;color:#0f1111;">6,35</div>
<svg class="a" style="left:750px;top:480px" width="820" height="560" viewBox="750 480 820 560"><defs><linearGradient id="gl" x1="0" x2="1" y1="0" y2="0"><stop offset="0" stop-color="#fcfcfc"/><stop offset="0.6" stop-color="#eeeeee"/><stop offset="1" stop-color="#e8e8e8"/></linearGradient><linearGradient id="gt" x1="0" x2="0" y1="0" y2="1"><stop offset="0" stop-color="#f8f8f8"/><stop offset="0.6" stop-color="#eeeeee"/><stop offset="1" stop-color="#e8e8e8"/></linearGradient><linearGradient id="gr" x1="0" x2="1" y1="0" y2="0"><stop offset="0" stop-color="#e2e2e2"/><stop offset="0.6" stop-color="#ebebeb"/><stop offset="1" stop-color="#f6f6f6"/></linearGradient><filter id="blr" x="-20%" y="-20%" width="140%" height="140%"><feGaussianBlur stdDeviation="2"/></filter><pattern id="hex" width="18" height="31" patternUnits="userSpaceOnUse"><path d="M9 0v5.2L0 10.4v10.4L9 26v5M9 5.2l9 5.2v10.4L9 26" fill="none" stroke="#efefef" stroke-width="0.8"/></pattern></defs><rect x="775" y="499" width="741" height="560" fill="#e9e9e9"/><rect x="775" y="499" width="10" height="560" fill="url(#gl)"/><rect x="775" y="499" width="741" height="10" fill="url(#gt)"/><rect x="1506" y="499" width="10" height="560" fill="url(#gr)"/><path d="M780 510.5H1500M784.5 512V1030M780 1022.3H1500" stroke="#cbcbcb" stroke-width="1.4" stroke-dasharray="8 8" fill="none"/><rect x="792.5" y="518.5" width="329.5" height="496.5" fill="#fff" stroke="#b4b4b4" stroke-width="1"/><rect x="1167.8" y="518.5" width="329.2" height="496.5" fill="#fff" stroke="#b4b4b4" stroke-width="1"/><rect x="1122" y="499" width="46" height="560" fill="#e8e8e8"/><rect x="1131.7" y="518.5" width="26.8" height="496.5" fill="#fff" stroke="#b4b4b4" stroke-width="1"/><path d="M1122.3 499V1030M1167.5 499V1030" stroke="#d0d0d0" stroke-width="1"/><path d="M1134 519V1014M1156 519V1014" stroke="#ececec" stroke-width="1"/><path d="M1126.8 500V518M1162.8 500V518" stroke="#cfcfcf" stroke-width="1" stroke-dasharray="4 4"/><path d="M778 492L858 502" stroke="#e4e4e4" stroke-width="7" stroke-linecap="round" filter="url(#blr)"/><path d="M764 507L774 582" stroke="#e4e4e4" stroke-width="7" stroke-linecap="round" filter="url(#blr)"/><g fill="none" stroke="#7a7a7a" stroke-width="1.3"><circle cx="865.5" cy="493" r="3.3"/><circle cx="858.7" cy="508.3" r="3.3"/></g><path d="M867.5 496L875 505L897 507.5L875 506.5L862 507" fill="none" stroke="#666" stroke-width="1.6" stroke-linejoin="round"/><g fill="none" stroke="#7a7a7a" stroke-width="1.3"><circle cx="765.5" cy="592" r="3.3"/><circle cx="781" cy="583.5" r="3.3"/></g><path d="M768.5 593.5L779 601L781 623L778.5 601L780.5 587" fill="none" stroke="#666" stroke-width="1.6" stroke-linejoin="round"/><path d="M1104 592H1122.6" stroke="#0a0a0a" fill="none" stroke-width="1.2"/><path d="M1122.6 592H1167.4M1122.6 586.5V597.5M1167.4 586.5V597.5" stroke="#0a0a0a" fill="none" stroke-width="1.8"/><path d="M1104 627H1131.1" stroke="#0a0a0a" fill="none" stroke-width="1.2"/><path d="M1131.1 627H1158.5M1131.1 621.5V632.5M1158.5 621.5V632.5" stroke="#0a0a0a" fill="none" stroke-width="1.8"/><path d="M1104 662.2H1122.6" stroke="#0a0a0a" fill="none" stroke-width="1.2"/><path d="M1122.6 662.2H1131.1M1122.6 657V667.4M1131.1 657V667.4M1158.5 662.2H1167.4M1158.5 657V667.4M1167.4 657V667.4" stroke="#0a0a0a" fill="none" stroke-width="1.8"/><path d="M1126.8 658V653.8H1163V658" stroke="#0a0a0a" fill="none" stroke-width="1.2"/><circle cx="1093.1" cy="592" r="11.6" fill="#000"/><text x="1093.1" y="597.6" text-anchor="middle" font-family="Liberation Sans" font-weight="bold" font-size="16" fill="#fff">6</text><circle cx="1093.1" cy="627" r="11.6" fill="#000"/><text x="1093.1" y="632.6" text-anchor="middle" font-family="Liberation Sans" font-weight="bold" font-size="16" fill="#fff">7</text><circle cx="1093.1" cy="662.2" r="11.6" fill="#000"/><text x="1093.1" y="667.8000000000001" text-anchor="middle" font-family="Liberation Sans" font-weight="bold" font-size="16" fill="#fff">8</text><path d="M1373.3 540V510.8M1367.8 510.8H1378.8M1367.8 518.4H1378.8" stroke="#0a0a0a" fill="none" stroke-width="1.8"/><path d="M1404.7 540V499.8M1399.2 499.8H1410.2M1399.2 510.5H1410.2" stroke="#0a0a0a" fill="none" stroke-width="1.8"/><path d="M1473.4 518.4V1014.9M1468 518.4H1479M1468 1014.9H1479" stroke="#0a0a0a" fill="none" stroke-width="2"/><path d="M1505.2 510.8V1027.5M1499.7 510.8H1510.7" stroke="#0a0a0a" fill="none" stroke-width="2"/><path d="M1536 499.8V1029M1530.5 499.8H1541.5M1511 1029H1536" stroke="#0a0a0a" fill="none" stroke-width="2"/><circle cx="1373.3" cy="551.2" r="11.6" fill="#000"/><text x="1373.3" y="556.8000000000001" text-anchor="middle" font-family="Liberation Sans" font-weight="bold" font-size="16" fill="#fff">5</text><circle cx="1404.7" cy="551.2" r="11.6" fill="#000"/><text x="1404.7" y="556.8000000000001" text-anchor="middle" font-family="Liberation Sans" font-weight="bold" font-size="16" fill="#fff">4</text><circle cx="1473.5" cy="551.2" r="11.6" fill="#000"/><text x="1473.5" y="556.8000000000001" text-anchor="middle" font-family="Liberation Sans" font-weight="bold" font-size="16" fill="#fff">3</text><circle cx="1505.2" cy="551.2" r="11.6" fill="#000"/><text x="1505.2" y="556.8000000000001" text-anchor="middle" font-family="Liberation Sans" font-weight="bold" font-size="16" fill="#fff">2</text><circle cx="1536" cy="551.2" r="11.6" fill="#000"/><text x="1536" y="556.8000000000001" text-anchor="middle" font-family="Liberation Sans" font-weight="bold" font-size="16" fill="#fff">1</text><path d="M1167.2 984.6H1497.6M1167.2 979V990.2M1497.6 979V990.2" stroke="#0a0a0a" fill="none" stroke-width="2"/><path d="M1465.8 984V976.4H1473" stroke="#0a0a0a" fill="none" stroke-width="1"/><path d="M1167.2 1022.5H1510.6M1167.2 1017V1028" stroke="#0a0a0a" fill="none" stroke-width="2"/><path d="M1497.5 1022V1014.7H1505" stroke="#888" fill="none" stroke-width="1"/><circle cx="1331.3" cy="691" r="96" fill="url(#hex)" stroke="#c9c9c9" stroke-width="1"/><text x="1268.5" y="671.3" font-family="Liberation Sans" font-size="23" fill="#a2a2a2" letter-spacing="-0.6">kindle</text><text x="1268.5" y="693.4" font-family="Liberation Sans" font-size="23" fill="#a2a2a2" letter-spacing="-0.6">direct</text><text x="1268.5" y="715.6" font-family="Liberation Sans" font-size="23" fill="#a2a2a2" letter-spacing="-0.2">publishing</text><text x="1269.5" y="729.6" font-family="Liberation Sans" font-weight="bold" font-size="7.3" fill="#b0b0b0">SELF-PUBLISH IN DIGITAL &amp; PRINT</text><rect x="993" y="931.5" width="115" height="68.2" fill="#fff" stroke="#cacaca" stroke-width="1"/><path d="M1091 914.2H985.2V1007.2H1011.7M1091 914.2H1115V955.5" stroke="#333" fill="none" stroke-width="1.1"/><path d="M1107.4 955.6H1122.5M1107.4 950.5V960.7M1122.5 950.5V960.7" stroke="#0a0a0a" fill="none" stroke-width="1.8"/><path d="M1011.7 999.7V1015M1006.5 999.7H1017M1006.5 1015H1017" stroke="#0a0a0a" fill="none" stroke-width="1.8"/><rect x="1004.0" y="942.7" width="1" height="50.6" fill="#a9a9a9"/><rect x="1006.5" y="942.7" width="1.5" height="50.6" fill="#a9a9a9"/><rect x="1010.5" y="942.7" width="3" height="50.6" fill="#a9a9a9"/><rect x="1014.5" y="942.7" width="3" height="50.6" fill="#a9a9a9"/><rect x="1018.5" y="942.7" width="2" height="50.6" fill="#a9a9a9"/><rect x="1022.5" y="942.7" width="3" height="50.6" fill="#a9a9a9"/><rect x="1027.0" y="942.7" width="1" height="50.6" fill="#a9a9a9"/><rect x="1030.5" y="942.7" width="3" height="50.6" fill="#a9a9a9"/><rect x="1036.0" y="942.7" width="2" height="50.6" fill="#a9a9a9"/><rect x="1039.5" y="942.7" width="1" height="50.6" fill="#a9a9a9"/><rect x="1042.0" y="942.7" width="3" height="50.6" fill="#a9a9a9"/><rect x="1047.5" y="942.7" width="1" height="50.6" fill="#a9a9a9"/><rect x="1049.5" y="942.7" width="1" height="50.6" fill="#a9a9a9"/><rect x="1051.5" y="942.7" width="1.5" height="50.6" fill="#a9a9a9"/><rect x="1054.0" y="942.7" width="1.5" height="50.6" fill="#a9a9a9"/><rect x="1058.0" y="942.7" width="3" height="50.6" fill="#a9a9a9"/><rect x="1068.0" y="945" width="3" height="46" fill="#a9a9a9"/><rect x="1072.5" y="945" width="3" height="46" fill="#a9a9a9"/><rect x="1076.5" y="945" width="2" height="46" fill="#a9a9a9"/><rect x="1079.5" y="945" width="1" height="46" fill="#a9a9a9"/><rect x="1081.5" y="945" width="3" height="46" fill="#a9a9a9"/><rect x="1085.5" y="945" width="2" height="46" fill="#a9a9a9"/><rect x="1090.0" y="945" width="3" height="46" fill="#a9a9a9"/><rect x="1095.5" y="945" width="2" height="46" fill="#a9a9a9"/><rect x="1004" y="936" width="58" height="4" fill="#dcdcdc"/><circle cx="1091.2" cy="914.2" r="11.6" fill="#000"/><text x="1091.2" y="919.8000000000001" text-anchor="middle" font-family="Liberation Sans" font-weight="bold" font-size="16" fill="#fff">9</text></svg>
</div></div>
<div class="a" style="left:1900px;top:151px;width:20px;height:880px;background:#fbfbfb"></div>
<svg class="a" style="left:1903px;top:156px" width="14" height="10" viewBox="0 0 14 10"><path d="M1 9L7 2l6 7z" fill="#a3a3a3"/></svg>
<svg class="a" style="left:1903px;top:1013px" width="14" height="10" viewBox="0 0 14 10"><path d="M1 1l6 7 6-7z" fill="#a3a3a3"/></svg>
<div class="a" style="left:1904px;top:347px;width:12px;height:462px;background:#6a6a6a;border-radius:6px"></div><div class="a" style="left:0;top:1031px;width:1920px;height:49px;background:linear-gradient(90deg,#e9e5ea 0%,#e3e5ee 3%,#e2e4ed 35%,#e6e2ea 55%,#efdedd 72%,#f1dcd8 100%)"></div>
<svg class="a" style="left:20px;top:1046px" width="21" height="20" viewBox="0 0 21 20"><path d="M0 2.8L8.6 1.6V9.4H0zM9.6 1.5L21 0V9.4H9.6zM0 10.4H8.6V18.4L0 17.2zM9.6 10.4H21V20L9.6 18.5z" fill="#111"/></svg>
<div class="a" style="left:61px;top:1031px;width:358px;height:49px;background:#fff"></div>
<svg class="a" style="left:75px;top:1045px" width="22" height="22" viewBox="0 0 22 22"><circle cx="13" cy="8.5" r="6.5" fill="none" stroke="#222" stroke-width="1.7"/><path d="M8.3 13.2L1.5 20" stroke="#222" stroke-width="1.8"/></svg>
<div class="a t" style="left:110px;top:1044.5px;font-size:18.7px;color:#2b2b2b">Cerca</div>
<svg class="a" style="left:439px;top:1044px" width="22" height="22" viewBox="0 0 22 22"><path d="M1 1.5h14M1 20.5h14M3 5h10v12H3z" fill="none" stroke="#222" stroke-width="1.5"/><path d="M19.5 1v5M19.5 16v5" stroke="#222" stroke-width="1.3"/><rect x="18" y="9" width="3" height="4" fill="#222"/></svg>
<svg class="a" style="left:497px;top:1039px" width="33" height="33" viewBox="0 0 33 33"><defs><linearGradient id="eg1" x1="0" y1="0" x2="1" y2="1"><stop offset="0" stop-color="#35c1f1"/><stop offset="0.5" stop-color="#1b82d2"/><stop offset="1" stop-color="#0c59a4"/></linearGradient><linearGradient id="eg2" x1="0" y1="0" x2="1" y2="0"><stop offset="0" stop-color="#50e6b0"/><stop offset="1" stop-color="#76d23a"/></linearGradient></defs><circle cx="16.5" cy="16.5" r="15.5" fill="url(#eg1)"/><path d="M31 13c-1-6-7-11-14.5-11C9 2 3 7.5 2 14c3-4 8-5.5 12-4.5 5 1.2 7 5 6 8.5H11c0 3 3 5.5 8 5.5 5 0 10-3 12-8z" fill="url(#eg2)"/><path d="M11 19c0 4 3.5 6.5 8 6.5" fill="none" stroke="#fff" stroke-width="3"/></svg>
<svg class="a" style="left:560px;top:1041px" width="32" height="28" viewBox="0 0 32 28"><path d="M1 10L16 1l15 9v17H1z" fill="#0f6cbd"/><path d="M4 6h24v14H4z" fill="#fff"/><path d="M1 10l15 10 15-10v17H1z" fill="#28a8ea"/><path d="M1 27l15-10 15 10z" fill="#50d9ff"/></svg>
<svg class="a" style="left:623px;top:1042px" width="30" height="27" viewBox="0 0 30 27"><path d="M1 3h10l2 2h16v20H1z" fill="#f3b623"/><path d="M1 8h28v17H1z" fill="#ffd55b"/><path d="M8 16h14v9h-4v-5h-6v5H8z" fill="#2c7fd6"/></svg>
<div class="a" style="left:613px;top:1077px;width:51px;height:3px;background:#c7393a"></div>
<svg class="a" style="left:684px;top:1040px" width="30" height="31" viewBox="0 0 30 31"><path d="M9 7V4.5a6 6 0 0 1 12 0V7" fill="none" stroke="#3a6fc4" stroke-width="2"/><rect x="1" y="7" width="28" height="23" rx="4" fill="#1d4f91"/><rect x="9" y="12" width="5.5" height="5.5" fill="#f25022"/><rect x="15.5" y="12" width="5.5" height="5.5" fill="#7fba00"/><rect x="9" y="18.5" width="5.5" height="5.5" fill="#00a4ef"/><rect x="15.5" y="18.5" width="5.5" height="5.5" fill="#ffb900"/></svg>
<svg class="a" style="left:747px;top:1045px" width="30" height="22" viewBox="0 0 30 22"><rect x="1" y="1" width="28" height="20" fill="#c9e4f7" stroke="#4a9ad8" stroke-width="1.5"/><rect x="4" y="4" width="9" height="10" fill="#3d8fd6"/><path d="M15 5h11M15 9h11M15 13h11M4 17h22" stroke="#3d8fd6" stroke-width="1.5"/></svg>
<svg class="a" style="left:810px;top:1040px" width="28" height="30" viewBox="0 0 28 30"><path d="M10 4l14-2 3 24-14 2z" fill="#2e6bbd"/><path d="M2 6l13-1 1 24-13 1z" fill="#fff" stroke="#666" stroke-width="0.8"/><path d="M9 12c-3 3-4 5-2 6.5 1 .7 2 0 2-1l-1 4h3l-1-4c0 1 1 1.7 2 1 2-1.5 1-3.5-3-6.5z" fill="#111"/><path d="M22 3v6M19 6h6" stroke="#fff" stroke-width="1.5"/></svg>
<div class="a" style="left:872px;top:1042px;width:28px;height:27px;background:#0d1a4a;border:2px solid #2f63c5"></div>
<div class="a t" style="left:876px;top:1044px;font-size:15px;font-weight:bold;color:#8ec3ff">Ps</div>
<div class="a" style="left:861px;top:1077px;width:51px;height:3px;background:#c7393a"></div>
<svg class="a" style="left:932px;top:1039px" width="32" height="32" viewBox="0 0 32 32"><path d="M16 2.5A13.5 13.5 0 0 0 4.2 22.6L2.5 29.5l7-1.7A13.5 13.5 0 1 0 16 2.5z" fill="none" stroke="#1c8f3f" stroke-width="2.4"/><path d="M10.5 9.5c1-1 2-1 2.5 0l1.5 3c.3.6 0 1.2-.5 1.7l-.8.8c1 2 2.7 3.7 4.7 4.7l.8-.8c.5-.5 1.1-.8 1.7-.5l3 1.5c1 .5 1 1.5 0 2.5-2 2-5 1.5-8.5-1.5s-6-7-4.4-11.4z" fill="#1c8f3f"/></svg>
<div class="a" style="left:923px;top:1077px;width:51px;height:3px;background:#c7393a"></div>
<div class="a" style="left:983px;top:1032px;width:60px;height:48px;background:#eeeef2"></div>
<svg class="a" style="left:993px;top:1039px" width="33" height="33" viewBox="0 0 33 33"><circle cx="16.5" cy="16.5" r="15.5" fill="#db4437"/><path d="M16.5 16.5L3.1 24.25A15.5 15.5 0 0 0 16.5 32z" fill="#0f9d58"/><path d="M16.5 16.5L3.1 24.25A15.5 15.5 0 0 1 3.1 8.75z" fill="#0f9d58"/><path d="M16.5 16.5V32A15.5 15.5 0 0 0 29.9 8.75z" fill="#ffcd40"/><path d="M16.5 16.5L29.9 8.75A15.5 15.5 0 0 0 16.5 1 15.5 15.5 0 0 0 3.1 8.75z" fill="#db4437"/><path d="M10.4 20L3.1 8.75A15.5 15.5 0 0 0 16.5 32L23.2 20z" fill="#0f9d58"/><path d="M23 13H29.9A15.5 15.5 0 0 1 16.5 32L23 20.5z" fill="#ffcd40"/><circle cx="16.5" cy="16.5" r="7.3" fill="#fff"/><circle cx="16.5" cy="16.5" r="5.6" fill="#4285f4"/></svg>
<div class="a" style="left:995px;top:1077px;width:47px;height:3px;background:#c7393a"></div>
<svg class="a" style="left:1371px;top:1041px" width="28" height="28" viewBox="0 0 28 28"><defs><radialGradient id="sun" cx="0.4" cy="0.35" r="0.7"><stop offset="0" stop-color="#ffc21a"/><stop offset="1" stop-color="#f07c0f"/></radialGradient></defs><circle cx="14" cy="14" r="13" fill="url(#sun)"/></svg>
<div class="a t" style="left:1410px;top:1044.5px;font-size:19px;color:#1b1b1b">12°C&nbsp; Soleggiato</div>
<svg class="a" style="left:1573px;top:1047px" width="18" height="12" viewBox="0 0 18 12"><path d="M1 10L9 2l8 8" fill="none" stroke="#222" stroke-width="1.6"/></svg>
<svg class="a" style="left:1603px;top:1045px" width="18" height="20" viewBox="0 0 18 20"><rect x="1" y="3" width="11" height="12" rx="2" fill="none" stroke="#222" stroke-width="1.4"/><path d="M12 7l5-3v10l-5-3" fill="none" stroke="#222" stroke-width="1.4"/><circle cx="6.5" cy="9" r="2" fill="#222"/><path d="M3 19h7" stroke="#222" stroke-width="1.4"/></svg>
<svg class="a" style="left:1631px;top:1046px" width="22" height="16" viewBox="0 0 22 16"><path d="M2 1v3M4 1v3M1 4h4v3" fill="none" stroke="#222" stroke-width="1.2"/><rect x="3.5" y="6.5" width="16" height="8" fill="#111" stroke="#222" stroke-width="1.2"/><rect x="19.5" y="8.5" width="1.8" height="4" fill="#222"/></svg>
<svg class="a" style="left:1663px;top:1045px" width="19" height="20" viewBox="0 0 19 20"><path d="M1 19A17 17 0 0 1 18 2M4.5 19A13.5 13.5 0 0 1 18 5.5M8 19A10 10 0 0 1 18 9M11.5 19A6.5 6.5 0 0 1 18 12.5" fill="none" stroke="#222" stroke-width="1.2"/><path d="M15 19V15h3v4z" fill="#222"/></svg>
<svg class="a" style="left:1690px;top:1045px" width="23" height="20" viewBox="0 0 23 20"><path d="M1 7h4l6-5v16l-6-5H1z" fill="none" stroke="#222" stroke-width="1.4" stroke-linejoin="round"/><path d="M14 7c1.2 1.6 1.2 4.4 0 6M17 4.5c2.3 3 2.3 8 0 11M20 2c3.3 4.5 3.3 11.5 0 16" fill="none" stroke="#222" stroke-width="1.3"/></svg>
<div class="a t" style="left:1738.5px;top:1034.5px;font-size:15px;color:#1b1b1b;transform:translateX(-50%)">ITA</div>
<div class="a t" style="left:1738.5px;top:1058px;font-size:15px;color:#1b1b1b;transform:translateX(-50%)">142</div>
<div class="a t" style="left:1808px;top:1034.5px;font-size:15px;color:#1b1b1b;transform:translateX(-50%)">11:06</div>
<div class="a t" style="left:1808px;top:1058px;font-size:15px;color:#1b1b1b;transform:translateX(-50%)">25/03/2026</div>
<svg class="a" style="left:1867px;top:1045px" width="23" height="22" viewBox="0 0 23 22"><path d="M1.5 1.5h19v15H13.5l-2.5 3-2.5-3H1.5z" fill="none" stroke="#222" stroke-width="1.5" stroke-linejoin="round"/></svg>
</body></html>
